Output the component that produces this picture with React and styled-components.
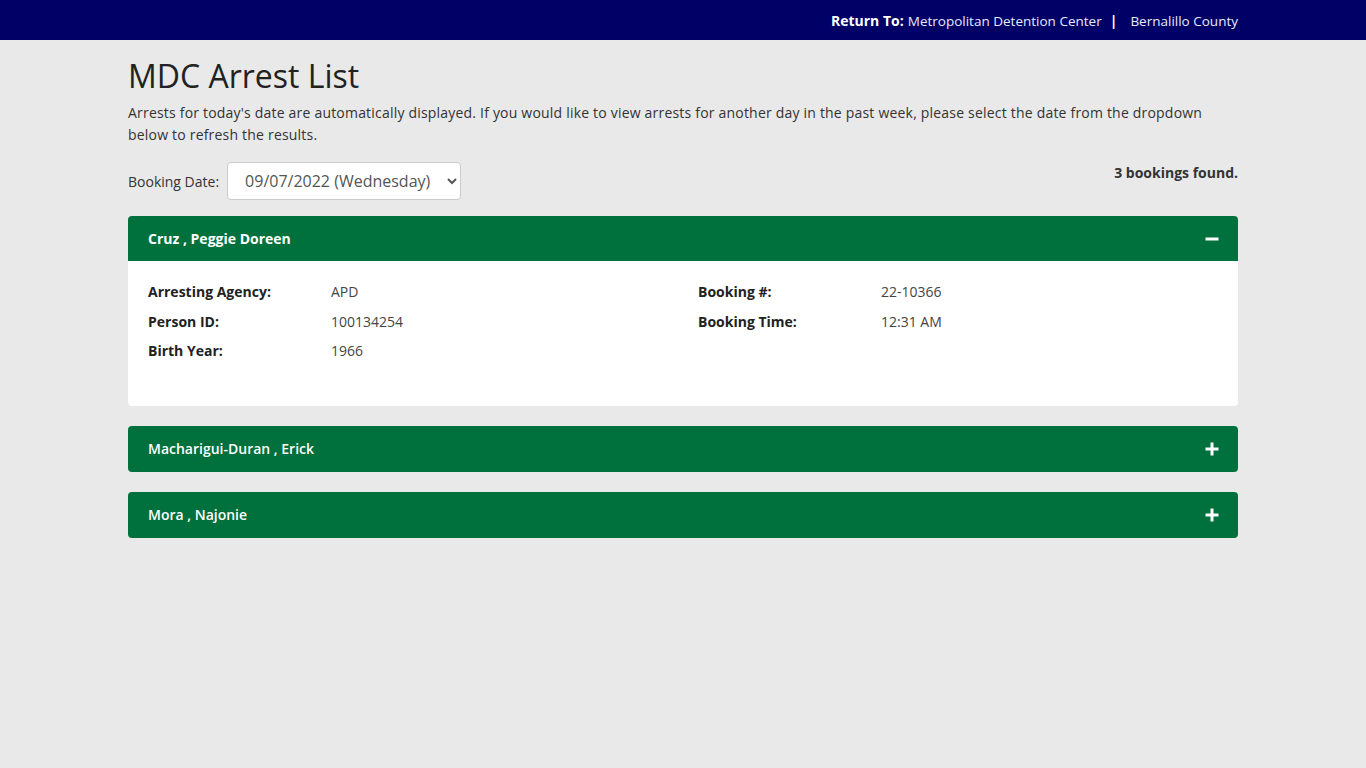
import React from "react";
import styled, { createGlobalStyle } from "styled-components";

const Global = createGlobalStyle`
  html, body { margin: 0; padding: 0; }
  body {
    background: #e9e9e9;
    font-family: "Open Sans", "Liberation Sans", sans-serif;
    font-size: 14px;
    color: #333;
  }
  * { box-sizing: border-box; }
`;

const TopBar = styled.div`
  height: 40px;
  background: #000066;
  color: #fff;
`;

const Container = styled.div`
  width: 1110px;
  margin: 0 auto;
`;

const TopInner = styled(Container)`
  height: 40px;
  display: flex;
  align-items: center;
  justify-content: flex-end;
  font-size: 14px;
  padding-top: 1px;
`;

const Strong = styled.b`
  font-weight: 700;
  margin-right: 4px;
`;

const TopLink = styled.span`
  color: #e8e8ff;
  font-size: 13.5px;
`;

const Sep = styled.b`
  margin: 0 13px 0 8px;
`;

const Title = styled.h1`
  margin: 0;
  padding-top: 15px;
  font-size: 32px;
  font-weight: 400;
  line-height: 42px;
  color: #222;
`;

const Intro = styled.p`
  margin: 5px 0 16px;
  line-height: 22px;
  font-size: 14px;
  letter-spacing: 0.2px;
  color: #333;
`;

const FilterRow = styled.div`
  display: flex;
  justify-content: space-between;
  align-items: flex-start;
  margin-bottom: 16px;
`;

const Field = styled.label`
  display: flex;
  align-items: center;
  gap: 8px;
  font-size: 14px;
  color: #333;
`;

const Select = styled.select`
  width: 234px;
  height: 38px;
  padding: 4px 8px 4px 13px;
  font-family: "Open Sans", "Liberation Sans", sans-serif;
  font-size: 16px;
  color: #555;
  background: #fff;
  border: 1px solid #ccc;
  border-radius: 4px;
`;

const Count = styled.div`
  font-weight: 700;
  font-size: 14px;
  color: #333;
  padding-top: 1px;
`;

const Panel = styled.section`
  margin-bottom: 20px;
  border-radius: 4px;
  overflow: hidden;
`;

const Header = styled.div`
  height: ${(p) => (p.$open ? 45 : 46)}px;
  background: #00703c;
  color: #fff;
  display: flex;
  align-items: center;
  justify-content: space-between;
  padding: 0 19px 0 20px;
  font-size: 14px;
  font-weight: ${(p) => (p.$open ? 700 : 600)};
`;

const Name = styled.span`
  padding-bottom: 1px;
`;

const Body = styled.div`
  background: #fff;
  padding: 20px 20px 44px;
  display: grid;
  grid-template-columns: 550px 1fr;
`;

const Col = styled.div`
  display: flex;
  flex-direction: column;
  gap: 7.5px;
`;

const Row = styled.div`
  display: grid;
  grid-template-columns: 183px 1fr;
  line-height: 22px;
`;

const Label = styled.div`
  font-weight: 700;
  color: #222;
`;

const Value = styled.div`
  color: #444;
`;

const Icon = ({ open }) => (
  <svg width="14" height="14" viewBox="0 0 14 14">
    <rect x="0.5" y="5.5" width="13" height="3" fill="#fff" />
    {!open && <rect x="5.5" y="0.5" width="3" height="13" fill="#fff" />}
  </svg>
);

const people = [
  {
    name: "Cruz , Peggie Doreen",
    open: true,
    left: [
      ["Arresting Agency:", "APD"],
      ["Person ID:", "100134254"],
      ["Birth Year:", "1966"],
    ],
    right: [
      ["Booking #:", "22-10366"],
      ["Booking Time:", "12:31 AM"],
    ],
  },
  { name: "Macharigui-Duran , Erick", open: false },
  { name: "Mora , Najonie", open: false },
];

export default function App() {
  return (
    <>
      <Global />
      <TopBar>
        <TopInner>
          <Strong>Return To:</Strong>
          <TopLink>Metropolitan Detention Center</TopLink>
          <Sep>|</Sep>
          <TopLink>Bernalillo County</TopLink>
        </TopInner>
      </TopBar>
      <Container>
        <Title>MDC Arrest List</Title>
        <Intro>
          Arrests for today's date are automatically displayed. If you would like to view arrests for
          another day in the past week, please select the date from the dropdown below to refresh the
          results.
        </Intro>
        <FilterRow>
          <Field>
            Booking Date:
            <Select defaultValue="2022-09-07">
              <option value="2022-09-07">09/07/2022 (Wednesday)</option>
            </Select>
          </Field>
          <Count>3 bookings found.</Count>
        </FilterRow>
        {people.map((p) => (
          <Panel key={p.name}>
            <Header $open={p.open}>
              <Name>{p.name}</Name>
              <Icon open={p.open} />
            </Header>
            {p.open && (
              <Body>
                <Col>
                  {p.left.map(([l, v]) => (
                    <Row key={l}>
                      <Label>{l}</Label>
                      <Value>{v}</Value>
                    </Row>
                  ))}
                </Col>
                <Col>
                  {p.right.map(([l, v]) => (
                    <Row key={l}>
                      <Label>{l}</Label>
                      <Value>{v}</Value>
                    </Row>
                  ))}
                </Col>
              </Body>
            )}
          </Panel>
        ))}
      </Container>
    </>
  );
}
